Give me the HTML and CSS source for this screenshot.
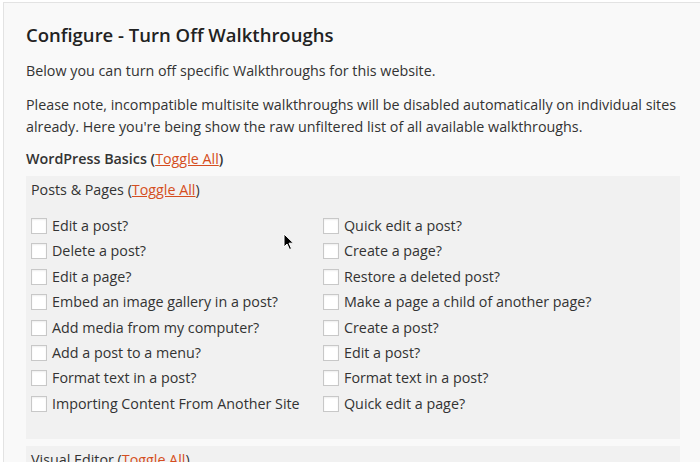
FILE: index.html
```html
<!DOCTYPE html>
<html>
<head>
<meta charset="utf-8">
<link rel="stylesheet" href="styles.css">
</head>
<body>
<div class="card">
  <h2 class="title">Configure - Turn Off Walkthroughs</h2>
  <p class="text intro">Below you can turn off specific Walkthroughs for this website.</p>
  <p class="text">Please note, incompatible multisite walkthroughs will be disabled automatically on individual sites already. Here you're being show the raw unfiltered list of all available walkthroughs.</p>
  <div class="group-head">WordPress Basics (<a class="toggle" href="#">Toggle All</a>)</div>
  <div class="box">
    <div class="box-head">Posts &amp; Pages (<a class="toggle" href="#">Toggle All</a>)</div>
    <div class="grid">
      <label class="item"><span class="cb"></span>Edit a post?</label>
      <label class="item"><span class="cb"></span>Quick edit a post?</label>
      <label class="item"><span class="cb"></span>Delete a post?</label>
      <label class="item"><span class="cb"></span>Create a page?</label>
      <label class="item"><span class="cb"></span>Edit a page?</label>
      <label class="item"><span class="cb"></span>Restore a deleted post?</label>
      <label class="item"><span class="cb"></span>Embed an image gallery in a post?</label>
      <label class="item"><span class="cb"></span>Make a page a child of another page?</label>
      <label class="item"><span class="cb"></span>Add media from my computer?</label>
      <label class="item"><span class="cb"></span>Create a post?</label>
      <label class="item"><span class="cb"></span>Add a post to a menu?</label>
      <label class="item"><span class="cb"></span>Edit a post?</label>
      <label class="item"><span class="cb"></span>Format text in a post?</label>
      <label class="item"><span class="cb"></span>Format text in a post?</label>
      <label class="item"><span class="cb"></span>Importing Content From Another Site</label>
      <label class="item"><span class="cb"></span>Quick edit a page?</label>
    </div>
  </div>
  <div class="box box-next">
    <div class="box-head">Visual Editor (<a class="toggle" href="#">Toggle All</a>)</div>
  </div>
</div>
<svg class="cursor" width="12" height="18" viewBox="0 0 12 18"><path d="M1 1 L1 14 L4 11 L6.5 16.5 L8.5 15.6 L6 10.2 L10.5 10.2 Z" fill="#000" stroke="#fff" stroke-width="1"/></svg>
</body>
</html>
```
FILE: styles.css
```css
html, body {
  margin: 0;
  padding: 0;
  background: #ffffff;
  font-family: "Open Sans", sans-serif;
  color: #333;
  overflow: hidden;
  height: 462px;
}
.card {
  margin: 2px 0 0 3px;
  border: 1px solid #e3e3e3;
  border-right: none;
  border-bottom: none;
  background: #f9f9f9;
  padding: 18px 20px 0 22px;
  height: 441px;
  overflow: hidden;
}
.title {
  margin: 0 0 12px 0;
  font-size: 18.5px;
  font-weight: 600;
  line-height: 27px;
  color: #222;
}
.text {
  margin: 0 0 10px 0;
  font-size: 14.3px;
  line-height: 22px;
}
.intro {
  margin-bottom: 12px;
}
.group-head {
  font-size: 14.3px;
  font-weight: 600;
  line-height: 22px;
  margin-bottom: 6px;
}
.toggle {
  color: #d54e21;
  text-decoration: underline;
  font-weight: 400;
}
.box {
  background: #f1f1f1;
  padding: 3px 0 0 5px;
  margin-bottom: 7px;
  height: 260px;
}
.box-head {
  font-size: 14.3px;
  line-height: 22px;
  margin-bottom: 14px;
}
.grid {
  display: grid;
  grid-template-columns: 292px 1fr;
  row-gap: 3.4px;
}
.item {
  display: flex;
  align-items: center;
  font-size: 14.3px;
  line-height: 22px;
  height: 22px;
}
.cb {
  width: 16px;
  height: 16px;
  border: 1px solid #c8c8c8;
  background: #fff;
  box-sizing: border-box;
  margin-right: 5px;
  flex-shrink: 0;
  box-shadow: inset 0 1px 2px rgba(0,0,0,0.07);
}
.cursor {
  position: absolute;
  left: 283px;
  top: 233px;
}
```
